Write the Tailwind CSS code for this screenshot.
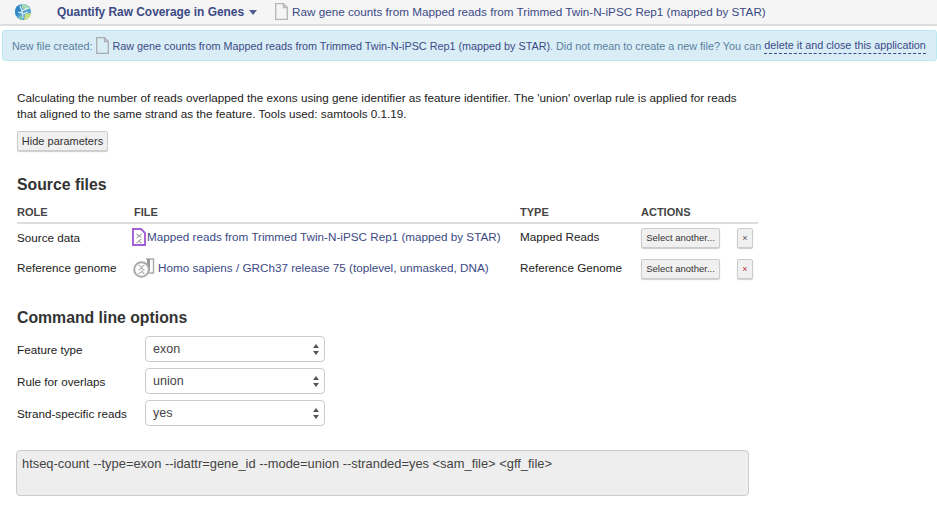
<!DOCTYPE html>
<html lang="en">
<head>
    <meta charset="UTF-8">
    <title>Quantify Raw Coverage in Genes</title>
    <script src="https://cdn.jsdelivr.net/npm/@tailwindcss/browser@4"></script>
</head>
<body class="bg-white font-['Liberation_Sans',Arial,sans-serif] text-[11.7px] leading-[16px] text-[#333] h-[508px] overflow-hidden">

    <!-- Top navbar -->
    <nav class="h-[26px] bg-[#f5f5f5] border-b-2 border-[#ddd] flex items-center">
        <svg class="shrink-0 ml-[15px] w-[16px] h-[16px] -mt-[1px]" viewBox="0 0 16 16">
            <circle cx="8" cy="8" r="8" fill="#4f9fd6"/>
            <path d="M7 0a8 8 0 0 1 8 5l-5 1-3-2z" fill="#a5d9b5"/>
            <path d="M0 8a8 8 0 0 1 4-7l2 5-3 5-2 1z" fill="#2f86c4"/>
            <path d="M9 16l1-6 6-1a8 8 0 0 1-7 7z" fill="#c9e07f"/>
            <path d="M3 14l3-3 2 5a8 8 0 0 1-5-2z" fill="#7fc8a9"/>
            <path d="M5 2l2 5 1 7M7 7l6-3M8 10l5-2M3 8l4 1" stroke="#e8f5f0" stroke-width="1.1" fill="none"/>
        </svg>
        <span class="ml-[26px] text-[11.9px] font-bold text-[#3b4a85]">Quantify Raw Coverage in Genes</span>
        <span class="ml-[5px] w-0 h-0 border-x-[4px] border-x-transparent border-t-[5px] border-t-[#4f5d8f]"></span>
        <svg class="shrink-0 ml-[18px] w-[13px] h-[17px] -mt-[2px]" viewBox="0 0 13 17" fill="none" stroke="#b5b5b5" stroke-width="1.3">
            <path d="M.7.7h7.8l3.8 3.8v11.8H.7z"/><path d="M8.5.7v3.8h3.8"/>
        </svg>
        <span class="ml-[4px] text-[#3b4a85]">Raw gene counts from Mapped reads from Trimmed Twin-N-iPSC Rep1 (mapped by STAR)</span>
    </nav>

    <!-- Alert -->
    <div class="mt-[4px] ml-[2px] h-[31px] bg-[#d9edf7] border border-[#bce8f1] rounded-[3px] flex items-center pl-[9px] whitespace-nowrap text-[10.8px] text-[#5a7f9e]">
        <span>New file created:</span>
        <svg class="shrink-0 ml-[4px] w-[13px] h-[17px]" viewBox="0 0 13 17" fill="none" stroke="#a9adb0" stroke-width="1.3">
            <path d="M.7.7h7.8l3.8 3.8v11.8H.7z"/><path d="M8.5.7v3.8h3.8"/>
        </svg>
        <span class="ml-[3px] text-[#3b4a85]">Raw gene counts from Mapped reads from Trimmed Twin-N-iPSC Rep1 (mapped by STAR)</span>
        <span>. Did not mean to create a new file? You can&nbsp;</span>
        <span class="text-[#3b4a85] border-b border-dashed border-[#3b4a85] leading-[15px]">delete it and close this application</span>
    </div>

    <main class="pl-[17px] w-[758px]">
        <p class="mt-[29px] w-[740px] text-[#222]">Calculating the number of reads overlapped the exons using gene identifier as feature identifier. The 'union' overlap rule is applied for reads that aligned to the same strand as the feature. Tools used: samtools 0.1.19.</p>

        <button class="block mt-[9px] h-[20px] w-[91px] bg-[#f0f0f0] border border-[#ccc] rounded-[2px] text-[11px] text-[#333] shadow-[0_1px_1px_#ccc]">Hide parameters</button>

        <h2 class="mt-[24px] text-[15.8px] leading-[20px] font-bold text-[#333]">Source files</h2>

        <!-- Files table -->
        <div class="mt-[10px] h-[19px] border-b-2 border-[#ddd] grid grid-cols-[117px_386px_121px_1fr] text-[11px] leading-[14px] font-bold text-[#444]">
            <span>ROLE</span><span>FILE</span><span>TYPE</span><span>ACTIONS</span>
        </div>
        <div class="h-[31px] pb-[3px] grid grid-cols-[117px_386px_121px_1fr] items-center">
            <span class="text-[#222]">Source data</span>
            <span class="flex items-center whitespace-nowrap -ml-[2px] -mt-[2px]">
                <svg class="shrink-0 w-[14px] h-[18px] -mt-[1px]" viewBox="0 0 14 18" fill="none">
                    <path d="M1 1h8l4 4v12H1z" stroke="#a55fd6" stroke-width="1.9"/>
                    <path d="M4.5 6c3 2 3 3 5 3M9.5 6c-3 2-3 3-5 4M4.5 15c3-2 3-3 5-4M9.5 15c-2-1-2-2-3-2" stroke="#a3a3a3" stroke-width="1.1"/>
                </svg>
                <span class="ml-[1px] text-[#3b4a85]">Mapped reads from Trimmed Twin-N-iPSC Rep1 (mapped by STAR)</span>
            </span>
            <span class="text-[#222] -mt-[2px]">Mapped Reads</span>
            <div class="flex items-center">
                <button class="h-[20px] w-[79px] bg-[#f0f0f0] border border-[#ccc] rounded-[2px] text-[9.5px] text-[#333] shadow-[0_1px_1px_#ccc]">Select another...</button>
                <button class="ml-[17px] h-[20px] w-[16px] bg-[#f0f0f0] border border-[#ccc] rounded-[2px] text-[9px] leading-none text-[#555] shadow-[0_1px_1px_#ccc]">×</button>
            </div>
        </div>
        <div class="h-[31px] pb-[3px] grid grid-cols-[117px_386px_121px_1fr] items-center">
            <span class="text-[#222] -mt-[2px]">Reference genome</span>
            <span class="flex items-center whitespace-nowrap -ml-[1px] -mt-[2px]">
                <svg class="shrink-0 w-[23px] h-[20px]" viewBox="0 0 23 20" fill="none">
                    <path d="M13 1h7.500v14H16" stroke="#aaa" stroke-width="1.4"/>
                    <path d="M14 1h3v12h-3z" fill="#999"/>
                    <circle cx="8.500" cy="11.500" r="7.300" fill="#fff" stroke="#aaa" stroke-width="2"/>
                    <path d="M5.500 7c4 2 2 4 6 5M11.500 7c-4 2-2 4-6 5M5.500 16c3-2 3-3 6-4M11.500 16c-2-1-2-2-3-3" stroke="#aaa" stroke-width="1.1"/>
                </svg>
                <span class="ml-[2px] text-[#3b4a85]">Homo sapiens / GRCh37 release 75 (toplevel, unmasked, DNA)</span>
            </span>
            <span class="text-[#222] -mt-[2px]">Reference Genome</span>
            <div class="flex items-center">
                <button class="h-[20px] w-[79px] bg-[#f0f0f0] border border-[#ccc] rounded-[2px] text-[9.5px] text-[#333] shadow-[0_1px_1px_#ccc]">Select another...</button>
                <button class="ml-[17px] h-[20px] w-[16px] bg-[#f0f0f0] border border-[#ccc] rounded-[2px] text-[9px] leading-none text-[#b03030] shadow-[0_1px_1px_#ccc]">×</button>
            </div>
        </div>

        <h2 class="mt-[22px] text-[15.8px] leading-[20px] font-bold text-[#333]">Command line options</h2>

        <!-- Options -->
        <div class="mt-[8px] flex flex-col gap-[6px]">
            <div class="flex items-center">
                <span class="w-[128px] text-[#222] mt-[1px]">Feature type</span>
                <div class="w-[180px] h-[26px] border border-[#ccc] rounded-[4px] bg-white flex items-center justify-between pl-[7px] pr-[5px] text-[12.5px] text-[#444]">
                    <span class="-mt-[1px]">exon</span>
                    <svg class="w-[6px] h-[11px]" viewBox="0 0 6 11" fill="#555"><path d="M3 0l3 4H0zM3 11L0 7h6z"/></svg>
                </div>
            </div>
            <div class="flex items-center">
                <span class="w-[128px] text-[#222] mt-[1px]">Rule for overlaps</span>
                <div class="w-[180px] h-[26px] border border-[#ccc] rounded-[4px] bg-white flex items-center justify-between pl-[7px] pr-[5px] text-[12.5px] text-[#444]">
                    <span class="-mt-[1px]">union</span>
                    <svg class="w-[6px] h-[11px]" viewBox="0 0 6 11" fill="#555"><path d="M3 0l3 4H0zM3 11L0 7h6z"/></svg>
                </div>
            </div>
            <div class="flex items-center">
                <span class="w-[128px] text-[#222] mt-[1px]">Strand-specific reads</span>
                <div class="w-[180px] h-[26px] border border-[#ccc] rounded-[4px] bg-white flex items-center justify-between pl-[7px] pr-[5px] text-[12.5px] text-[#444]">
                    <span class="-mt-[1px]">yes</span>
                    <svg class="w-[6px] h-[11px]" viewBox="0 0 6 11" fill="#555"><path d="M3 0l3 4H0zM3 11L0 7h6z"/></svg>
                </div>
            </div>
        </div>

        <!-- Command preview -->
        <div class="mt-[24px] -ml-px w-[733px] h-[46px] bg-[#eee] border border-[#ccc] rounded-[4px] pl-[5px] pt-[5px] text-[12.9px] text-[#444]">htseq-count --type=exon --idattr=gene_id --mode=union --stranded=yes &lt;sam_file&gt; &lt;gff_file&gt;</div>
    </main>
</body>
</html>
